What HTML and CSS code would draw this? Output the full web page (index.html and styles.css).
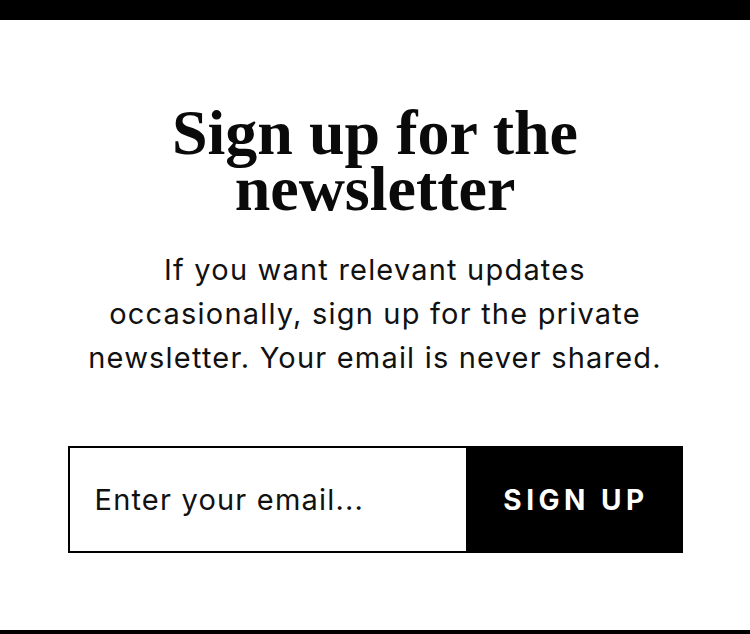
FILE: index.html
```html
<!DOCTYPE html>
<html lang="en">
<head>
<meta charset="utf-8">
<title>Newsletter</title>
<link rel="stylesheet" href="styles.css">
</head>
<body>
<main class="page">
  <section class="newsletter">
    <h1 class="newsletter__title">Sign up for the newsletter</h1>
    <p class="newsletter__text">If you want relevant updates occasionally, sign up for the private newsletter. Your email is never shared.</p>
    <form class="signup" onsubmit="return false;">
      <input class="signup__input" type="email" placeholder="Enter your email...">
      <button class="signup__button" type="submit">SIGN UP</button>
    </form>
  </section>
</main>
</body>
</html>
```

FILE: styles.css
```css
html, body {
  margin: 0;
  padding: 0;
  background: #fff;
}

.page {
  box-sizing: border-box;
  height: 634px;
  border-top: 20px solid #000;
  border-bottom: 4px solid #000;
  display: flex;
  flex-direction: column;
  align-items: center;
}

.newsletter {
  display: flex;
  flex-direction: column;
  align-items: center;
  padding-top: 85px;
}

.newsletter__title {
  margin: 0;
  width: 560px;
  font-family: "Liberation Serif", "Times New Roman", serif;
  font-weight: 700;
  font-size: 64px;
  line-height: 56px;
  letter-spacing: 0;
  text-align: center;
  color: #0a0a0a;
}

.newsletter__text {
  margin: 31px 0 0;
  width: 610px;
  font-family: Inter, "Noto Sans", sans-serif;
  font-size: 29px;
  line-height: 44px;
  letter-spacing: 1.2px;
  text-align: center;
  color: #111;
}

.signup {
  margin-top: 66px;
  width: 615px;
  height: 107px;
  box-sizing: border-box;
  border: 2px solid #000;
  display: flex;
}

.signup__input {
  width: 396px;
  box-sizing: border-box;
  border: 0;
  outline: none;
  padding: 0 0 0 25px;
  margin: 0;
  font-family: Inter, "Noto Sans", sans-serif;
  font-size: 29px;
  letter-spacing: 1.2px;
  color: #111;
  background: #fff;
}

.signup__input::placeholder {
  color: #111;
  opacity: 1;
}

.signup__button {
  flex: 1;
  margin: 0 -2px 0 0;
  border: 0;
  padding: 0 0 0 4px;
  background: #000;
  color: #fff;
  font-family: Inter, "Noto Sans", sans-serif;
  font-weight: 700;
  font-size: 28px;
  letter-spacing: 4.5px;
  cursor: pointer;
}
```
